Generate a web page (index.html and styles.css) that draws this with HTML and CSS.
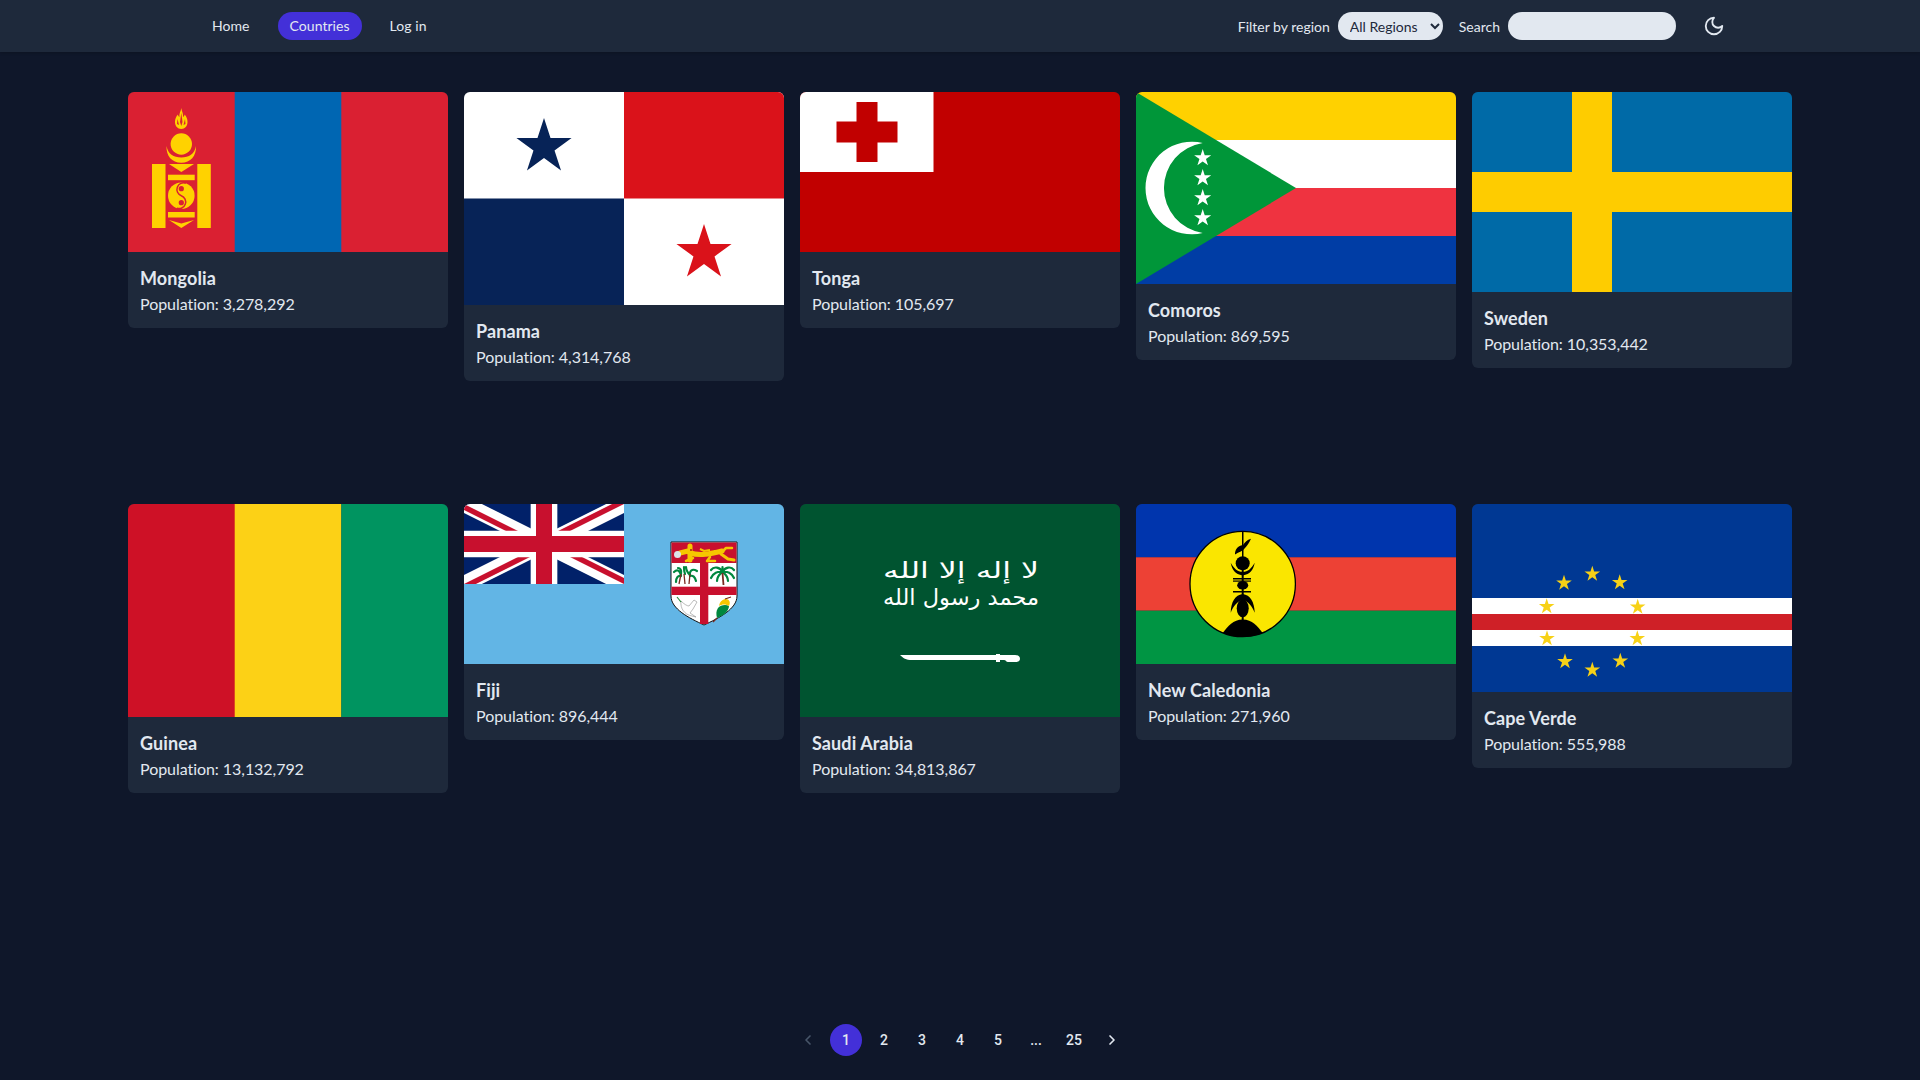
FILE: index.html
```html
<!DOCTYPE html>
<html lang="en">
<head>
<meta charset="utf-8">
<title>Countries</title>
<link rel="stylesheet" href="styles.css">
</head>
<body>
<svg class="defs" aria-hidden="true"><defs><polygon id="star" points="0,-1 .2245,-.309 .951,-.309 .363,.118 .588,.809 0,.382 -.588,.809 -.363,.118 -.951,-.309 -.2245,-.309"/></defs></svg>
<header class="topbar">
  <nav class="nav">
    <a class="nav-link">Home</a>
    <a class="nav-link active">Countries</a>
    <a class="nav-link">Log in</a>
  </nav>
  <div class="tools">
    <label class="tool"><span>Filter by region</span>
      <select class="region"><option>All Regions</option></select>
    </label>
    <label class="tool"><span>Search</span><input class="search" type="text"></label>
    <button class="theme" aria-label="Toggle theme"><svg viewBox="0 0 24 24" width="22" height="22" fill="none" stroke="#e2e8f0" stroke-width="2" stroke-linecap="round" stroke-linejoin="round"><path d="M12 3a6 6 0 0 0 9 9 9 9 0 1 1-9-9Z"/></svg></button>
  </div>
</header>
<main class="grid">
  <article class="card">
    <svg class="flag" viewBox="0 0 320 160">
      <rect width="320" height="160" fill="#da2032"/><rect x="106.700" width="106.600" height="160" fill="#0066b2"/>
      <g fill="#ffd200">
        <path d="M53.300 16C53.800 20 55.500 21 55 25C56 24.500 56.500 23.500 56.500 22.500C58.500 24.500 59.500 27 59.500 30C59.500 34 57 37 53.300 37C49.600 37 47 34 47 30C47 27 48 24.500 50 22.500C50 23.500 50.500 24.500 51.500 25C51 21 52.800 20 53.300 16Z"/>
        <circle cx="53.300" cy="52" r="10.700"/>
        <path d="M38.500 54C40 62 45.500 65.500 53.300 65.500C61 65.500 66.500 62 68 54C68.500 64 62.500 70.800 53.300 70.800C44 70.800 38 64 38.500 54Z"/>
        <rect x="24" y="72" width="13.500" height="64"/><rect x="69.300" y="72" width="13.500" height="64"/>
        <path d="M41 72H66L53.300 80Z"/><rect x="40" y="82.700" width="26.700" height="5.500"/>
        <circle cx="53.300" cy="103.700" r="13.300"/>
        <rect x="40" y="120" width="26.700" height="5.500"/><path d="M41 128L53.300 131.500L66 128L53.300 136Z"/>
      </g>
      <path d="M53.300 90.400a6.650 6.650 0 0 0 0 13.300a6.650 6.650 0 0 1 0 13.300" transform="rotate(20 53.300 103.700)" fill="none" stroke="#da2032" stroke-width="1.500"/>
      <g fill="#da2032"><circle cx="53.300" cy="96.700" r="2.600"/><circle cx="53.300" cy="110.700" r="2.600"/><path d="M53.300 21L54.500 30L53.300 34L52 30Z"/><path d="M49.500 27L51 33L49 32Z"/><path d="M57 27L55.500 33L57.500 32Z"/></g>
    </svg>
    <div class="info"><h2>Mongolia</h2><p>Population: 3,278,292</p></div>
  </article>
  <article class="card">
    <svg class="flag" viewBox="0 0 320 213">
      <rect width="320" height="213" fill="#fff"/><rect x="160" width="160" height="106.500" fill="#da121a"/><rect y="106.500" width="160" height="106.500" fill="#072357"/>
      <use href="#star" transform="translate(80 55) scale(29)" fill="#072357"/>
      <use href="#star" transform="translate(240 161) scale(29)" fill="#da121a"/>
    </svg>
    <div class="info"><h2>Panama</h2><p>Population: 4,314,768</p></div>
  </article>
  <article class="card">
    <svg class="flag" viewBox="0 0 320 160">
      <rect width="320" height="160" fill="#c10000"/><rect width="133.500" height="80" fill="#fff"/>
      <rect x="56.500" y="10" width="21" height="60" fill="#c10000"/><rect x="36.500" y="29.500" width="61" height="21" fill="#c10000"/>
    </svg>
    <div class="info"><h2>Tonga</h2><p>Population: 105,697</p></div>
  </article>
  <article class="card">
    <svg class="flag" viewBox="0 0 320 192">
      <rect width="320" height="48" fill="#ffd100"/><rect y="48" width="320" height="48" fill="#fff"/><rect y="96" width="320" height="48" fill="#ef3340"/><rect y="144" width="320" height="48" fill="#003da5"/>
      <path d="M0 0L160 96L0 192Z" fill="#009639"/>
      <path d="M66.700 51A46.300 46.300 0 1 0 66.700 141A45.500 45.500 0 0 1 66.700 51Z" fill="#fff"/>
      <g fill="#fff"><use href="#star" transform="translate(66.700 66) scale(9)"/><use href="#star" transform="translate(66.700 86) scale(9)"/><use href="#star" transform="translate(66.700 106) scale(9)"/><use href="#star" transform="translate(66.700 126) scale(9)"/></g>
    </svg>
    <div class="info"><h2>Comoros</h2><p>Population: 869,595</p></div>
  </article>
  <article class="card">
    <svg class="flag" viewBox="0 0 320 200">
      <rect width="320" height="200" fill="#006aa7"/><rect x="100" width="40" height="200" fill="#fecc00"/><rect y="80" width="320" height="40" fill="#fecc00"/>
    </svg>
    <div class="info"><h2>Sweden</h2><p>Population: 10,353,442</p></div>
  </article>
  <article class="card">
    <svg class="flag" viewBox="0 0 320 213">
      <rect width="107" height="213" fill="#ce1126"/><rect x="106.700" width="106.700" height="213" fill="#fcd116"/><rect x="213.300" width="106.700" height="213" fill="#009460"/>
    </svg>
    <div class="info"><h2>Guinea</h2><p>Population: 13,132,792</p></div>
  </article>
  <article class="card">
    <svg class="flag" viewBox="0 0 320 160">
      <rect width="320" height="160" fill="#62b5e5"/>
      <svg width="160" height="80" viewBox="0 0 60 30">
        <clipPath id="uj"><path d="M30 15h30v15zv15h-30zh-30v-15zv-15h30z"/></clipPath>
        <rect width="60" height="30" fill="#012169"/>
        <path d="M0 0L60 30M60 0L0 30" stroke="#fff" stroke-width="6"/>
        <path d="M0 0L60 30M60 0L0 30" stroke="#c8102e" stroke-width="4" clip-path="url(#uj)"/>
        <path d="M30 0v30M0 15h60" stroke="#fff" stroke-width="10"/>
        <path d="M30 0v30M0 15h60" stroke="#c8102e" stroke-width="6"/>
      </svg>
      <path d="M207 38H273V92C273 105 255 114 240 121C225 114 207 105 207 92Z" fill="#fff" stroke="#111" stroke-width="1"/>
      <path d="M207.500 38.500H272.500V59H207.500Z" fill="#c8102e"/>
      <rect x="236" y="59" width="8.300" height="61" fill="#c8102e"/><rect x="207.500" y="82.700" width="65" height="8.300" fill="#c8102e"/>
      <g fill="none" stroke="#f6c700" stroke-linecap="round" stroke-linejoin="round">
        <path d="M216 49L224 47M226 42V56" stroke-width="5"/>
        <path d="M226 49C236 52 246 50 258 47" stroke-width="5"/>
        <path d="M229 54L222 57M246 53L243 57H251M258 48L262 44L268 44" stroke-width="2.500"/>
        <path d="M257 50L264 55L270 56" stroke-width="3"/>
      </g>
      <path d="M236 45L240 47L246 46M250 47H256" fill="none" stroke="#f6c700" stroke-width="2"/>
      <circle cx="227" cy="46" r="1" fill="#a5200f"/>
      <circle cx="213.500" cy="50.500" r="3.500" fill="#dde3e8"/>
      <g fill="none" stroke="#00873e" stroke-width="2.200" stroke-linecap="round">
        <path d="M217 72C216 66 213 65 210 68M217 70C218 66 216 64 214 64M217 72C214 71 212 74 212 78"/>
        <path d="M226 72C225 67 228 64 233 67M226 71C223 68 222 65 222 63M226 72C229 71 231 73 232 77"/>
        <path d="M221 70C220 67 220 65 220 63"/>
        <path d="M258.500 68C256 63 250 62 247 66M258.500 68C254 67 249 69 247 74M258.500 68C256 70 253 72 253 77M258.500 68C261 63 267 62 270 66M258.500 68C263 67 268 69 270 74M258.500 68C261 70 264 72 264 77M258.500 68V63"/>
      </g>
      <path d="M217 70L215 80M220 70L221 80M226 70L225 80" stroke="#7a2a20" stroke-width="1.300"/><path d="M258.500 69L259.500 81" stroke="#7a2a20" stroke-width="1.800"/>
      <path d="M217 97C220 100 223 102 225 102L230 96L233 98L229 105L226 109L232 113L226 111.500C221 110 216 105 217 97Z" fill="#fff" stroke="#8d8d8d" stroke-width=".6"/><path d="M213 93L217 98" stroke="#2a8a3e" stroke-width="1.200"/>
      <path d="M254 104C256 101 262 100 265 102C265 107 259 112 253 114C252 110 252 107 254 104Z" fill="#00873e"/><path d="M255 102C256 97 259 95 262 95C265 95 267 98 265 102C262 100 258 100 255 102Z" fill="#f6c700"/><path d="M261 95L267 93M253 114L249 118" stroke="#7a2a20" stroke-width="1.300"/>
    </svg>
    <div class="info"><h2>Fiji</h2><p>Population: 896,444</p></div>
  </article>
  <article class="card">
    <svg class="flag" viewBox="0 0 320 213">
      <rect width="320" height="213" fill="#005430"/>
      <g class="shahada" fill="#fff">
        <text transform="translate(161 74) scale(1 1.150)" text-anchor="middle" textLength="156" lengthAdjust="spacingAndGlyphs">لا إله إلا الله</text>
        <text transform="translate(161 100.500) scale(1 1.150)" text-anchor="middle" textLength="156" lengthAdjust="spacingAndGlyphs">محمد رسول الله</text>
      </g>
      <path d="M100 151H196V150H200V151H215C219 151 220 153 220 155C220 157 218 158 216 158H208C206 158 206 156 204 156H200V158H196V156H112C106 156 103 154 100 151Z" fill="#fff"/>
    </svg>
    <div class="info"><h2>Saudi Arabia</h2><p>Population: 34,813,867</p></div>
  </article>
  <article class="card">
    <svg class="flag" viewBox="0 0 320 160">
      <rect width="320" height="53.400" fill="#0035ad"/><rect y="53.300" width="320" height="53.400" fill="#ed4135"/><rect y="106.700" width="320" height="53.300" fill="#009543"/>
      <circle cx="106.700" cy="80" r="52.700" fill="#fae600" stroke="#000" stroke-width="1.300"/>
      <clipPath id="ncc"><circle cx="106.700" cy="80" r="53"/></clipPath>
      <g fill="#000">
        <rect x="106" y="27" width="1.500" height="30"/>
        <path d="M115 34.700C111 36 109 38 107 41C101 42 99 46 99 50.500C103 48 107 47 109 44C111 42 113 39 115 34.700Z"/>
        <circle cx="106.700" cy="59.300" r="7"/>
        <path d="M94.700 58.700C96 66 99 70 106.700 71.500C114.400 70 117.400 66 118.700 58.700C115.500 64 112 68 106.700 68C101.400 68 97.900 64 94.700 58.700Z"/>
        <rect x="105.700" y="66" width="2" height="30"/>
        <rect x="97" y="74" width="18" height="1.500"/><rect x="97" y="76.500" width="18" height="1.200"/>
        <ellipse cx="106.700" cy="81.300" rx="5.500" ry="4.300"/>
        <rect x="97" y="87" width="18" height="1.500"/>
        <path d="M94.700 108.700C95 98 99 91 106.700 90C114.400 91 118.400 98 118.700 108.700C116 102 112 97 106.700 96C101.400 97 97.400 102 94.700 108.700Z"/>
        <ellipse cx="106.700" cy="104.300" rx="6" ry="9"/>
        <rect x="105.700" y="110" width="2" height="7"/>
        <path d="M86.700 129C92 122 97 115.500 106.700 115.500C116.400 115.500 121.400 122 126.700 129L118 134H95Z" clip-path="url(#ncc)"/>
      </g>
    </svg>
    <div class="info"><h2>New Caledonia</h2><p>Population: 271,960</p></div>
  </article>
  <article class="card">
    <svg class="flag" viewBox="0 0 320 188">
      <rect width="320" height="188" fill="#003893"/><rect y="94" width="320" height="48" fill="#fff"/><rect y="110" width="320" height="16" fill="#cf2027"/>
      <g fill="#f7d116">
        <use href="#star" transform="translate(120.300 70) scale(8.200)"/><use href="#star" transform="translate(92 79) scale(8.200)"/><use href="#star" transform="translate(147.700 78.500) scale(8.200)"/><use href="#star" transform="translate(74.700 102.500) scale(8.200)"/><use href="#star" transform="translate(165.700 103) scale(8.200)"/><use href="#star" transform="translate(75 134.500) scale(8.200)"/><use href="#star" transform="translate(165.300 134.500) scale(8.200)"/><use href="#star" transform="translate(93 157.500) scale(8.200)"/><use href="#star" transform="translate(148.300 157) scale(8.200)"/><use href="#star" transform="translate(120.300 166) scale(8.200)"/>
      </g>
    </svg>
    <div class="info"><h2>Cape Verde</h2><p>Population: 555,988</p></div>
  </article>
</main>
<nav class="pager">
  <span class="page dim"><svg viewBox="0 0 24 24" width="16" height="16" fill="none" stroke="currentColor" stroke-width="2.500" stroke-linecap="round" stroke-linejoin="round"><path d="M15 18l-6-6 6-6"/></svg></span>
  <span class="page current">1</span>
  <span class="page">2</span>
  <span class="page">3</span>
  <span class="page">4</span>
  <span class="page">5</span>
  <span class="page">...</span>
  <span class="page">25</span>
  <span class="page"><svg viewBox="0 0 24 24" width="16" height="16" fill="none" stroke="currentColor" stroke-width="2.500" stroke-linecap="round" stroke-linejoin="round"><path d="M9 18l6-6-6-6"/></svg></span>
</nav>
</body>
</html>
```
FILE: styles.css
```css
* { box-sizing: border-box; }
html, body { margin: 0; padding: 0; }
body {
  background: #0f172a;
  color: #e2e8f0;
  font-family: Lato, "Liberation Sans", sans-serif;
  font-size: 16px;
  min-height: 1080px;
}
.defs { width: 0; height: 0; display: block; overflow: hidden; }

.topbar {
  height: 52px;
  background: #1e293b;
  display: flex;
  align-items: center;
  justify-content: space-between;
  padding: 0 190px 0 200px;
  font-size: 14px;
  box-shadow: 0 1px 3px rgba(0, 0, 0, .2);
}
.nav { display: flex; gap: 16px; }
.nav-link {
  height: 28px;
  line-height: 28px;
  padding: 0 12px;
  border-radius: 14px;
  color: #e2e8f0;
  letter-spacing: .05px;
}
.nav-link.active { background: #4330d8; }

.tools { display: flex; align-items: center; gap: 16px; }
.tool { display: flex; align-items: center; gap: 8px; }
.region {
  width: 105px;
  height: 28px;
  background: #e2e8f0;
  color: #1e293b;
  border: 0;
  border-radius: 14px;
  padding: 0 4px 0 8px;
  font: 14px Lato, "Liberation Sans", sans-serif;
}
.search {
  width: 168px;
  height: 28px;
  background: #e2e8f0;
  border: 0;
  border-radius: 14px;
  padding: 0 12px;
}
.theme {
  width: 32px;
  height: 32px;
  margin-left: 6px;
  padding: 0;
  background: none;
  border: 0;
  display: flex;
  align-items: center;
  justify-content: center;
}

.grid {
  display: grid;
  grid-template-columns: repeat(5, 320px);
  grid-auto-rows: 396px;
  gap: 16px;
  align-items: start;
  padding: 40px 128px 0;
}
.card {
  background: #1e293b;
  border-radius: 6px;
  overflow: hidden;
}
.flag { display: block; width: 100%; height: auto; }
.info { padding: 12px; }
.info h2 {
  margin: 0;
  font-size: 18px;
  line-height: 28px;
  font-weight: 700;
  letter-spacing: .1px;
}
.info p { margin: 0; font-size: 16px; line-height: 24px; letter-spacing: -.05px; }
.shahada { font-family: "DejaVu Sans", sans-serif; font-size: 19px; }

.pager {
  margin-top: 124px;
  display: flex;
  justify-content: center;
  gap: 6px;
  font-family: Roboto, sans-serif;
  font-size: 14px;
  font-weight: 500;
}
.page {
  width: 32px;
  height: 32px;
  border-radius: 50%;
  display: flex;
  align-items: center;
  justify-content: center;
  color: #e2e8f0;
}
.page.current { background: #4330d8; }
.page.dim { color: #475569; }
```
